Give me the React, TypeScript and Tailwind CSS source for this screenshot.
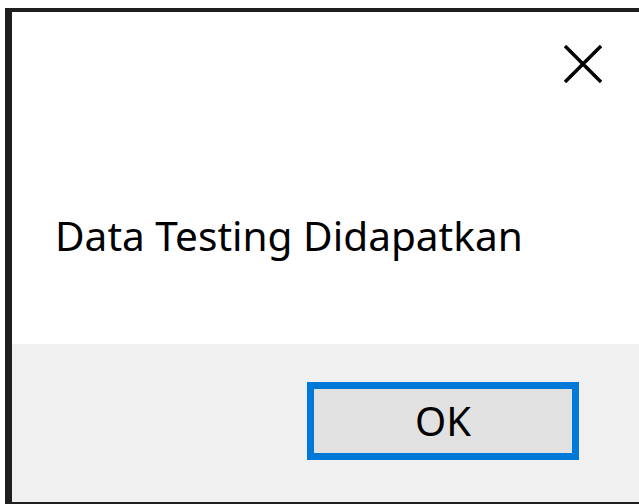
export default function App() {
  return (
    <div className="h-[504px] w-[639px] overflow-hidden bg-white pl-[5px] pt-[8px]">
      <div
        className="flex h-[496px] flex-col border-b-[2px] border-l-[7px] border-t-[4px] border-[#1f1f1f] bg-white"
        style={{ fontFamily: '"Noto Sans", "Open Sans", sans-serif' }}
      >
        {/* message area */}
        <div className="relative h-[332px] bg-white">
          <button
            type="button"
            aria-label="Close"
            className="absolute left-[552px] top-[33px] flex h-[38px] w-[38px] items-center justify-center"
          >
            <svg width="38" height="38" viewBox="0 0 38 38">
              <path d="M1 1 L37 37 M37 1 L1 37" stroke="#000" strokeWidth="3.5" />
            </svg>
          </button>
          <p className="absolute left-[43px] top-[196px] text-[40.6px] leading-[56px] text-black">
            Data Testing Didapatkan
          </p>
        </div>

        {/* button bar */}
        <div className="flex flex-1 items-start justify-end bg-[#f0f0f0] pr-[60px] pt-[38px]">
          <button
            type="button"
            className="flex h-[78px] w-[272px] items-center justify-center border-[7px] border-[#0078d7] bg-[#e1e1e1] text-[40px] text-black"
          >
            OK
          </button>
        </div>
      </div>
    </div>
  );
}
